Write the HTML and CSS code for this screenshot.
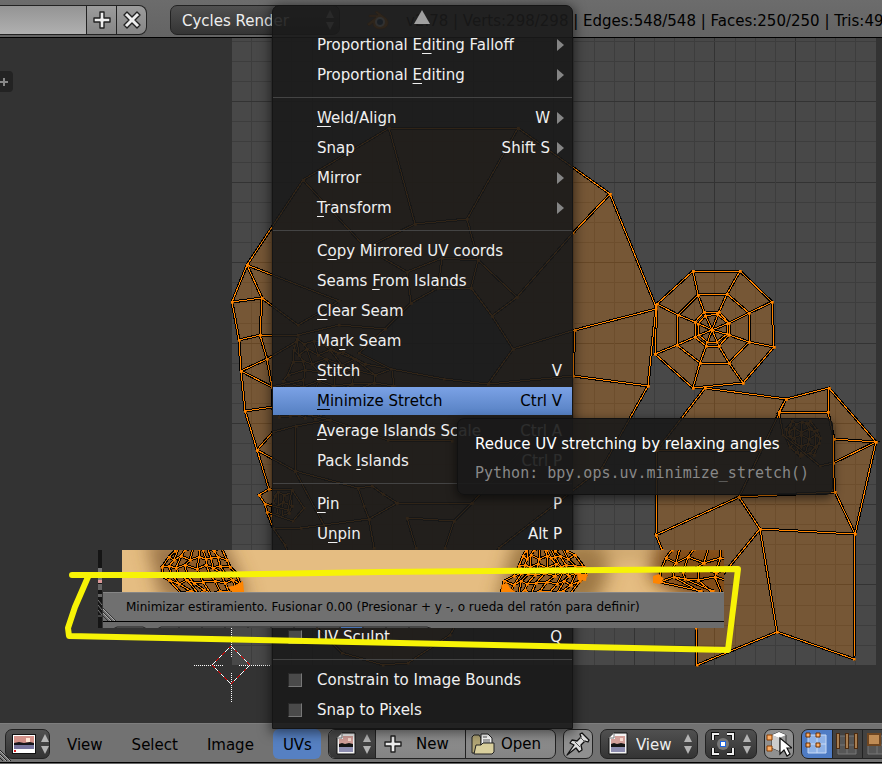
FILE: index.html
```html
<!DOCTYPE html>
<html lang="en">
<head>
    <meta charset="UTF-8">
    <meta name="viewport" content="width=device-width, initial-scale=1.0">
    <title>UV Editor</title>
    <link rel="stylesheet" href="styles.css">
</head>
<body>
    <!-- shared symbols -->
    <svg class="defs" aria-hidden="true">
        <symbol id="updown" viewBox="0 0 8 20"><path d="M0 8L4 0l4 8zM0 12h8l-4 8z" fill="#b4b4b4"/></symbol>
        <symbol id="plus" viewBox="0 0 18 18"><path d="M7 1h4v6h6v4h-6v6H7v-6H1V7h6z" fill="#eee" stroke="#222" stroke-width="1.4" stroke-linejoin="round"/></symbol>
        <symbol id="arrow" viewBox="0 0 8 12"><path d="M0 0l7 6-7 6z" fill="#858585"/></symbol>
        <symbol id="picture" viewBox="0 0 20 24">
            <path d="M6 1h13v21H1V6z" fill="#f4f4f4" stroke="#111"/>
            <path d="M7 4h10v9H3V7h4z" fill="#d3a09a"/>
            <path d="M3 12l3-1 3 1 4-1 4 1v3H3z" fill="#151515"/>
            <path d="M3 15h14v5H3z" fill="#8d8db0"/>
            <path d="M12 6h3v3h-3z" fill="#f7d9ce"/>
            <path d="M1 6h5V1" fill="#fff" stroke="#777"/>
        </symbol>
    </svg>

    <header class="info-bar">
        <div class="scene-field">
            <input type="text" aria-label="Scene name">
            <button aria-label="Add scene"><svg width="18" height="18"><use href="#plus"/></svg></button>
            <button aria-label="Delete scene"><svg width="18" height="18" viewBox="0 0 18 18"><path d="M4 1l5 5 5-5 3 3-5 5 5 5-3 3-5-5-5 5-3-3 5-5-5-5z" fill="#eee" stroke="#222" stroke-width="1.4" stroke-linejoin="round"/></svg></button>
        </div>
        <div class="picker engine">
            <select aria-label="Render engine"><option>Cycles Render</option></select>
            <svg width="8" height="20"><use href="#updown"/></svg>
        </div>
        <svg class="logo" width="24" height="20" viewBox="0 0 24 20">
            <path d="M1 14l9-7H3V5h9L9 2l2-1 9 7c5 5 1 11-6 11-4 0-7-2-7-6l-4 3z" fill="#e88b2d" stroke="#8a4b12" stroke-width=".7"/>
            <circle cx="14" cy="12" r="5" fill="#fff"/><circle cx="14" cy="12" r="3" fill="#265787"/>
        </svg>
        <p class="stats">v2.78 | Verts:298/298 | Edges:548/548 | Faces:250/250 | Tris:496</p>
    </header>

    <main class="stage">
        <svg class="canvas" viewBox="0 38 882 685" preserveAspectRatio="xMinYMin slice" aria-label="UV layout">
            <defs>
                <marker id="vert" markerUnits="userSpaceOnUse" markerWidth="3" markerHeight="3" refX="1.5" refY="1.5"><rect width="3" height="3" fill="#ff8500"/></marker>
                <path id="islands" d="M303 180L389 128 518 128 610 194 656 307 648 386 602 468 499 548 450 635 408 663 383 665 342 653 317 628 285 545 273 528 267 512 265 504 259 495 269 489 257 450 245 411 241 371 239 340 232 302 247 265zM411 303L438 288 471 288 492 316 513 349 488 384 444 379 391 369 359 353 385 329z
                    M693 271L740 271 772 302 774 347 743 383 693 388 655 354 657 304z
                    M705 388L786 399 829 388 876 442 855 534 854 659 777 632 697 665 696 628 684 590 662 550 656 535 657 450z"/>
                <path id="edges" d="M610 194L573 233 517 297 492 316M656 309L575 330 513 349M648 386L573 376 488 384M575 330L573 376M389 128L415 224 467 219 518 128M415 224L366 248 303 180M467 219L478 260 442 258 407 272 366 248M442 258L438 288M478 260L471 288M407 272L411 303M478 260L517 297
                    M247 265L262 298 260 335 267 359 272 387 273 410M232 302L262 298 298 325 339 301 247 265M239 340L260 335 298 335 339 325 385 329M241 371L267 359 296 342M241 371L272 387 303 380M245 411L273 407 330 420M257 450L273 432 296 426M257 450L295 471 358 488 372 486 383 494 397 503 472 503 540 430M269 489L292 490 288 510 265 504M292 490L304 508 293 521 267 512M295 471L296 426 330 420 388 440 452 441M358 488L364 506 369 519 374 548M369 519L301 528 273 528M397 503L369 519M407 518L454 521 472 503M407 518L416 548M454 521L445 548M295 471L325 527
                    M698 295L727 294 749 313 749 342 729 363 700 363 677 345 678 315zM704 312L719 312 729 323 729 335 719 346 706 346 695 337 695 322zM705 316L717 314 728 323 727 334 717 342 707 342 699 335 698 324z
                    M693 271L698 295 704 312 712 330 719 346 729 363 743 383M740 271L727 294 719 312 712 330 706 346 700 363 693 388M772 302L749 313 729 323 712 330 695 337 677 345 655 354M774 347L749 342 729 335 712 330 695 322 678 315 657 304
                    M786 399L779 412 828 412 829 388M828 412L834 439 876 442 833 463 835 492 855 534 760 529 777 632M834 439L833 463M656 535L739 497 835 492M786 399L739 497 760 529 684 622M779 412L783 435 820 466 833 463M657 450L760 450"/>
            </defs>
            <rect x="232" y="38" width="644" height="627" fill="#484848"/>
            <g id="grid" shape-rendering="crispEdges"></g>
            <use href="#islands" fill="#ff8500" fill-opacity=".25" fill-rule="evenodd"/>
            <g id="dense"></g>
            <g class="wire-shadow"><use href="#islands"/><use href="#edges"/></g>
            <g class="wire"><use href="#islands"/><use href="#edges"/></g>
            <g fill="none" shape-rendering="crispEdges">
                <path d="M194 665h30M239 665h31M231 628v30M231 673v30" stroke="#fff" stroke-dasharray="1 1"/>
                <path d="M231 646l19 19-19 19-19-19z" stroke="#f00"/>
                <path d="M231 646l19 19-19 19-19-19z" stroke="#fff" stroke-dasharray="5 4"/>
            </g>
        </svg>
        <button class="shelf-toggle" aria-label="Show tool shelf"><svg width="8" height="8" viewBox="0 0 8 8"><path d="M3 0h2v3h3v2H5v3H3V5H0V3h3z" fill="#888"/></svg></button>
    </main>

    <footer class="editor-bar">
        <button class="dark editor-type" aria-label="Editor type">
            <svg width="24" height="20" viewBox="0 0 24 20">
                <rect x=".5" y=".5" width="23" height="19" fill="#fff" stroke="#111"/>
                <path d="M2 2h20v8H2z" fill="#d4928a"/><path d="M2 10h20v5H2z" fill="#77749d"/>
                <path d="M2 9l5-1 5 1 6-1 4 1v2H2z" fill="#17151b"/><path d="M14 4h4v4h-4z" fill="#ffe6d6"/>
                <path d="M2 16h2v2H2z" fill="#d22"/>
            </svg>
            <svg width="8" height="20"><use href="#updown"/></svg>
        </button>
        <nav class="menus">
            <button>View</button>
            <button>Select</button>
            <button>Image</button>
            <button class="open">UVs</button>
        </nav>
        <div class="group image-group">
            <button class="dark" aria-label="Browse image"><svg width="20" height="24"><use href="#picture"/></svg><svg width="8" height="20"><use href="#updown"/></svg></button>
            <button class="new"><svg width="18" height="18"><use href="#plus"/></svg>New</button>
            <button class="load">
                <svg width="24" height="22" viewBox="0 0 24 22">
                    <path d="M1 20V4l2-2h5l2 3v15z" fill="#b3a675" stroke="#222"/>
                    <path d="M10 1h7l4 4v9H10z" fill="#fff" stroke="#222"/><path d="M12 4h4M12 7h7M12 9h7" stroke="#555"/>
                    <path d="M5 12h5l2-2h11v9l-2 2H3z" fill="#d9cf9d" stroke="#222"/>
                </svg>Open</button>
        </div>
        <button class="square" aria-label="Pin image">
            <svg width="24" height="24" viewBox="0 0 24 24"><path d="M1 23l7-10-4-2 2-3 5 1 4-4-1-3 2-1 7 7-1 2-3-1-4 4 1 5-3 2-3-4z" fill="#ddd" stroke="#111" stroke-width="1.3" stroke-linejoin="round"/><path d="M9 10l5 5M14 5l5 5" stroke="#555"/></svg>
        </button>
        <div class="picker mode">
            <svg width="20" height="24"><use href="#picture"/></svg>
            <select aria-label="Editing mode"><option>View</option></select>
            <svg width="8" height="20"><use href="#updown"/></svg>
        </div>
        <button class="dark pivot" aria-label="Pivot point">
            <svg width="24" height="24" viewBox="0 0 24 24">
                <path d="M2 8V2h6M16 2h6v6M22 16v6h-6M8 22H2v-6" fill="none" stroke="#111" stroke-width="4"/>
                <path d="M2 8V2h6M16 2h6v6M22 16v6h-6M8 22H2v-6" fill="none" stroke="#eee" stroke-width="2"/>
                <circle cx="12" cy="12" r="6" fill="#777"/><rect x="9" y="9" width="6" height="6" fill="#1d65e0"/><rect x="10" y="10" width="4" height="4" fill="#fff"/>
            </svg>
            <svg width="8" height="20"><use href="#updown"/></svg>
        </button>
        <button class="square" aria-label="Sync selection">
            <svg width="26" height="26" viewBox="0 0 26 26">
                <path d="M6 4l7-3 7 3v13l-7 3-7-3z" fill="#999" stroke="#333"/><path d="M6 4l7-3 7 3-7 3z" fill="#fff"/><path d="M6 4l7 3v13l-7-3z" fill="#ccc"/>
                <path d="M1 4h5v5H1zM1 15h5v5H1z" fill="#ffb066" stroke="#8a3d00"/>
                <path d="M14 7v16l4-4 3 6 3-2-3-6h5z" fill="#fff" stroke="#111" stroke-width="1.2"/>
            </svg>
        </button>
        <div class="group select-modes">
            <button class="active" aria-label="Vertex"><svg width="24" height="24" viewBox="0 0 24 24"><path d="M3 3h18v18H3zM12 3v18M3 12h18" fill="#8fb2e6" stroke="#c9dbf7"/><path d="M1 1h4v4H1zM11 1h4v4h-4zM1 11h4v4H1zM11 11h4v4h-4z" fill="#ffb066" stroke="#6b2f00"/></svg></button>
            <button aria-label="Edge"><svg width="24" height="24" viewBox="0 0 24 24"><path d="M3 4h18v18H3zM12 4v18M3 13h18" fill="#565656" stroke="#777"/><path d="M3 1v16M12 1v16M21 1v16" stroke="#4c2b10" stroke-width="4"/><path d="M3 2v14M12 2v14M21 2v14" stroke="#a87f52" stroke-width="2"/></svg></button>
            <button aria-label="Face"><svg width="24" height="24" viewBox="0 0 24 24"><path d="M3 4h18v18H3zM12 4v18M3 13h18" fill="#565656" stroke="#777"/><path d="M3 2h12v11H3z" fill="#c08c55" stroke="#6f4621" stroke-width="2"/></svg></button>
        </div>
        <svg class="corner" width="12" height="12" viewBox="0 0 12 12"><path d="M0 1l11 11M0 5l7 7M0 9l3 3" stroke="#222"/><path d="M0 2l10 10M0 6l6 6" stroke="#aaa"/></svg>
    </footer>

    <div class="menu" role="menu">
        <svg class="scroll-up" width="16" height="14" viewBox="0 0 16 14"><path d="M8 0l8 14H0z" fill="#a0a0a0"/></svg>
        <button class="item"><span>Proportional E<u>d</u>iting Falloff</span><svg width="8" height="12"><use href="#arrow"/></svg></button>
        <button class="item"><span>Proportional <u>E</u>diting</span><svg width="8" height="12"><use href="#arrow"/></svg></button>
        <hr>
        <button class="item"><span><u>W</u>eld/Align</span><kbd>W</kbd><svg width="8" height="12"><use href="#arrow"/></svg></button>
        <button class="item"><span>Snap</span><kbd>Shift S</kbd><svg width="8" height="12"><use href="#arrow"/></svg></button>
        <button class="item"><span>Mirror</span><svg width="8" height="12"><use href="#arrow"/></svg></button>
        <button class="item"><span><u>T</u>ransform</span><svg width="8" height="12"><use href="#arrow"/></svg></button>
        <hr>
        <button class="item"><span>C<u>o</u>py Mirrored UV coords</span></button>
        <button class="item"><span>Seams <u>F</u>rom Islands</span></button>
        <button class="item"><span><u>C</u>lear Seam</span></button>
        <button class="item"><span>Ma<u>r</u>k Seam</span></button>
        <button class="item"><span><u>S</u>titch</span><kbd>V</kbd></button>
        <button class="item current"><span><u>M</u>inimize Stretch</span><kbd>Ctrl V</kbd></button>
        <button class="item"><span><u>A</u>verage Islands Scale</span><kbd>Ctrl A</kbd></button>
        <button class="item"><span>Pack <u>I</u>slands</span><kbd>Ctrl P</kbd></button>
        <hr>
        <button class="item"><span><u>P</u>in</span><kbd>P</kbd></button>
        <button class="item"><span>U<u>n</u>pin</span><kbd>Alt P</kbd></button>
        <div class="covered"></div>
        <label class="item"><input type="checkbox"><span>UV Sculpt</span><kbd>Q</kbd></label>
        <hr>
        <label class="item"><input type="checkbox"><span>Constrain to Image Bounds</span></label>
        <label class="item"><input type="checkbox"><span>Snap to Pixels</span></label>
    </div>

    <div class="tooltip" role="tooltip">
        <p>Reduce UV stretching by relaxing angles</p>
        <code>Python: bpy.ops.uv.minimize_stretch()</code>
    </div>

    <section class="inset">
        <svg class="inset-edge" width="5" height="78" viewBox="0 0 5 78"><path d="M0 0h4v78H0z" fill="#151515"/><path d="M0 18h4v12H0z" fill="#777"/><path d="M0 30h4v3H0z" fill="#d99"/><path d="M0 34h4v6H0zM0 44h4v3H0z" fill="#666"/><path d="M0 50l4 5M0 55l4 5M0 60l4 5M0 66h4" stroke="#777"/></svg>
        <div class="inset-body">
            <svg class="skin" viewBox="122 550 602 42" preserveAspectRatio="xMinYMin slice">
                <defs>
                    <filter id="soft"><feGaussianBlur stdDeviation="9"/></filter>
                </defs>
                <rect x="122" y="550" width="602" height="42" fill="#e5bd82"/>
                <g filter="url(#soft)">
                    <path d="M146 540h78l26 60h-88z" fill="#7d5a30" opacity=".75"/>
                    <path d="M515 540h85l10 30-15 35h-100z" fill="#8b6536" opacity=".8"/>
                    <path d="M560 545h90v12h-90z" fill="#a98552" opacity=".6"/>
                    <path d="M655 540h90v60h-60l-35-22z" fill="#774615" opacity=".9"/>
                </g>
                <g id="heads"></g>
            </svg>
            <p class="status">Minimizar estiramiento. Fusionar 0.00 (Presionar + y -, o rueda del ratón para definir)
                <svg class="grip" width="14" height="14" viewBox="0 0 14 14"><path d="M0 1l13 13M0 5l9 9M0 9l5 5" stroke="#333"/><path d="M0 2l12 12M0 6l8 8" stroke="#aaa"/></svg>
            </p>
            <svg class="inset-tabs" viewBox="0 0 621 7" preserveAspectRatio="xMinYMin slice"><path d="M10 7l4-2h26l4 2M54 7l4-2h266l6 2M76 5v2M99 5v2M122 5v2M145 5v2M168 5v2M191 5v2M214 5v2M237 5v2M260 5v2M283 5v2M306 5v2" fill="none" stroke="#222"/><path d="M238 5h21v2h-21z" fill="#4772b3"/></svg>
        </div>
    </section>

    <svg class="highlight" width="680" height="92" viewBox="64 564 680 92"><path d="M72 575L200 575 380 572 738 569 728 650 400 643 69 636 68 628 75 607 88 577" fill="none" stroke="#f7f306" stroke-width="6" stroke-linecap="round" stroke-linejoin="round"/></svg>

    <script src="script.js"></script>
</body>
</html>
```
FILE: styles.css
```css
* {
    box-sizing: border-box;
}

body {
    margin: 0;
    height: 100vh;
    display: flex;
    flex-direction: column;
    position: relative;
    overflow: hidden;
    background: #333;
    font: 15px/20px "DejaVu Sans", sans-serif;
    color: #000;
}

p, hr {
    margin: 0;
}

button, select, input, kbd {
    font: inherit;
    color: inherit;
}

button {
    display: flex;
    align-items: center;
    flex-shrink: 0;
    border: 0;
    padding: 0;
    background: none;
    white-space: nowrap;
}

svg {
    flex-shrink: 0;
}

.defs {
    position: absolute;
    width: 0;
    height: 0;
}

/* top bar */
.info-bar {
    display: flex;
    align-items: center;
    height: 38px;
    padding-top: 2px;
    background: linear-gradient(#6c6c6c, #646464);
    border-bottom: 1px solid #000;
    overflow: hidden;
}

.scene-field {
    display: flex;
    flex-shrink: 0;
    height: 30px;
    border: 1px solid #222;
    border-left: 0;
    border-radius: 0 8px 8px 0;
    overflow: hidden;
    background: linear-gradient(#9c9c9c, #868686);
}

.scene-field input {
    width: 86px;
    border: 0;
    background: linear-gradient(#949494, #b0b0b0);
}

.scene-field button {
    width: 30px;
    justify-content: center;
    border-left: 1px solid #222;
}

.picker, .dark {
    display: flex;
    align-items: center;
    flex-shrink: 0;
    height: 30px;
    border: 1px solid #222;
    border-radius: 7px;
    background: linear-gradient(#505050, #343434);
    color: #eee;
}

.picker select {
    flex: 1;
    min-width: 0;
    appearance: none;
    border: 0;
    padding: 2px 0 0;
    background: none;
}

.engine {
    width: 170px;
    margin-left: 23px;
    padding: 0 5px 0 11px;
}

.logo {
    margin-left: 26px;
}

.stats {
    margin-left: 16px;
    padding-top: 2px;
    white-space: nowrap;
}

/* uv canvas */
.stage {
    flex: 1;
    min-height: 0;
    position: relative;
}

.canvas {
    display: block;
    width: 100%;
    height: 100%;
}

.wire, .wire-shadow {
    fill: none;
    shape-rendering: crispEdges;
}

.wire-shadow {
    stroke: #000;
    stroke-width: 3;
}

.wire {
    stroke: #ff8500;
    stroke-width: 1;
    marker: url(#vert);
}

.shelf-toggle {
    position: absolute;
    left: 0;
    top: 33px;
    width: 13px;
    height: 21px;
    background: #232323;
    border-radius: 0 4px 4px 0;
}

/* bottom bar */
.editor-bar {
    display: flex;
    align-items: flex-start;
    height: 41px;
    padding: 5px 0 0 5px;
    position: relative;
    overflow: hidden;
    background: linear-gradient(#727272 38px, #000 38px, #000 39px, #666 39px);
    border-top: 1px solid #7e7e7e;
}

.editor-type {
    width: 45px;
    padding-left: 6px;
    gap: 5px;
}

.menus {
    display: flex;
    flex-shrink: 0;
    margin-left: 7px;
}

.menus button {
    height: 30px;
    padding: 2px 9px 0 10px;
    margin-right: 10px;
}

.menus .open {
    background: #5680c2;
    border-radius: 6px;
    margin-right: 7px;
}

.group {
    display: flex;
    flex-shrink: 0;
    height: 30px;
    border: 1px solid #222;
    border-radius: 7px;
    overflow: hidden;
    background: linear-gradient(#929292, #848484);
}

.group button {
    height: 28px;
    border: 0;
    border-radius: 0;
}

.group button + button {
    border-left: 1px solid #222;
}

.image-group .dark {
    width: 46px;
    padding-left: 7px;
    gap: 7px;
}

.new {
    width: 90px;
    padding-left: 8px;
    gap: 14px;
}

.load {
    width: 90px;
    padding-left: 5px;
    gap: 6px;
}

.square {
    width: 30px;
    height: 30px;
    margin-left: 7px;
    justify-content: center;
    border: 1px solid #222;
    border-radius: 7px;
    background: #909090;
}

.mode {
    width: 98px;
    margin-left: 7px;
    padding: 0 5px 0 7px;
}

.mode select {
    margin-left: 8px;
}

.pivot {
    width: 52px;
    margin-left: 7px;
    padding-left: 5px;
    gap: 8px;
}

.select-modes {
    flex: 1 0 92px;
    margin-left: 7px;
    background: #424242;
}

.select-modes button {
    width: 30px;
    justify-content: center;
}

.select-modes .active {
    background: #4f7cc4;
}

.corner {
    position: absolute;
    left: 0;
    bottom: 3px;
}

/* uvs menu, opens upward over the canvas */
.menu {
    position: absolute;
    left: 272px;
    bottom: 35px;
    width: 301px;
    display: flex;
    flex-direction: column;
    padding: 25px 0 2px;
    border: 1px solid #151515;
    border-radius: 7px 7px 0 0;
    background: rgba(25, 25, 25, .9);
    box-shadow: 0 2px 12px 2px rgba(0, 0, 0, .5);
    color: #f0f0f0;
}

.scroll-up {
    position: absolute;
    left: 141px;
    top: 4px;
}

.item {
    display: flex;
    align-items: center;
    width: 100%;
    height: 28px;
    margin-bottom: 2px;
    padding: 0 10px 0 44px;
    text-align: left;
}

.item span {
    flex: 1;
}

.item svg {
    margin: 0 -3px 0 7px;
}

.item u {
    text-underline-offset: 3px;
    text-decoration-thickness: 1px;
    text-decoration-skip-ink: none;
}

.item input {
    appearance: none;
    width: 14px;
    height: 14px;
    margin: 0 15px 0 -29px;
    border: 1px solid #777;
    border-color: #2a2a2a #777 #777 #2a2a2a;
    background: #4a4a4a;
}

.current {
    background: linear-gradient(#7ba2e6, #5680c2);
    color: #000;
}

.menu hr {
    width: 100%;
    height: 1px;
    margin: 6px 0;
    border: 0;
    background: #444;
}

.covered {
    height: 73px;
}

.tooltip {
    position: absolute;
    left: 457px;
    top: 418px;
    padding: 15px 23px 11px 17px;
    border: 1px solid #111;
    border-radius: 7px;
    background: rgba(25, 25, 25, .91);
    box-shadow: 0 3px 10px 1px rgba(0, 0, 0, .5);
    color: #fff;
}

.tooltip code {
    display: block;
    margin-top: 9px;
    font: 15px/20px "DejaVu Sans Mono", monospace;
    color: #888;
}

/* pasted status strip */
.inset {
    position: absolute;
    left: 98px;
    top: 550px;
    width: 626px;
    display: flex;
    background: #333;
}

.inset-body {
    flex: 1;
    min-width: 0;
}

.skin {
    display: block;
    height: 42px;
    width: 602px;
    margin-left: 19px;
}

.status {
    position: relative;
    height: 30px;
    padding-left: 23px;
    border-top: 1px solid #868686;
    border-bottom: 1px solid #000;
    background: #707070;
    font-size: 12px;
    line-height: 28px;
    white-space: nowrap;
}

.grip {
    position: absolute;
    left: 0;
    bottom: 0;
}

.inset-tabs {
    display: block;
    width: 100%;
    height: 6px;
    background: #6b6b6b;
}

.highlight {
    position: absolute;
    left: 64px;
    top: 564px;
}
```
FILE: script.js
```js
const NS = 'http://www.w3.org/2000/svg';

function addPath(parent, d, attrs) {
    const path = document.createElementNS(NS, 'path');
    path.setAttribute('d', d);
    for (const name in attrs) {
        path.setAttribute(name, attrs[name]);
    }
    parent.appendChild(path);
}

// Grid: 32 cells over the image, every 4th line is darker
const grid = document.getElementById('grid');
const step = 20.14;
for (let i = 1; i < 32; i++) {
    const x = Math.round(232 + i * step) - 0.5;
    const y = Math.round(665 - i * step) + 0.5;
    let d = `M${x} 38V665`;
    if (y > 38) {
        d += `M232 ${y}H876`;
    }
    addPath(grid, d, { stroke: i % 4 === 0 ? '#333' : '#3d3d3d' });
}

// Mesh between a left and a right outline. rows: [y, left, right]
function mesh(parent, rows, cols, jitter) {
    const points = rows.map((row, r) => {
        const line = [];
        for (let c = 0; c <= cols; c++) {
            const x = row[1] + (row[2] - row[1]) * c / cols + Math.sin(r * 7 + c * 5) * jitter;
            const y = row[0] + Math.cos(r * 4 + c * 9) * jitter;
            line.push(`${Math.round(x)} ${Math.round(y)}`);
        }
        return line;
    });
    let d = '';
    points.forEach(line => {
        d += 'M' + line.join('L');
    });
    for (let c = 0; c <= cols; c++) {
        d += 'M' + points.map(line => line[c]).join('L');
    }
    const outline = 'M' + rows.map(r => `${r[1]} ${r[0]}`).join('L') + 'L' + rows.slice().reverse().map(r => `${r[2]} ${r[0]}`).join('L') + 'z';
    addPath(parent, outline, { fill: '#80440a', 'fill-opacity': 0.5 });
    addPath(parent, d, { class: 'wire-shadow' });
    addPath(parent, d, { class: 'wire' });
}

const heads = document.getElementById('heads');
mesh(heads, [[549, 175, 220], [558, 168, 227], [567, 160, 231], [574, 160, 238], [582, 168, 242], [592, 182, 243]], 8, 2);
mesh(heads, [[549, 526, 565], [557, 522, 573], [566, 517, 583], [574, 512, 586], [583, 503, 581], [592, 502, 572]], 9, 2);
mesh(heads, [[547, 672, 730], [560, 664, 730], [570, 658, 728], [579, 657, 730], [594, 700, 730]], 5, 3);
addPath(heads, 'M501 585l6-2 3 5 6 4h-14zM577 573l10 2-1 6-8-1zM653 576l6-2 5 5-5 5-6-1zM228 587l8-2 7-4 1 11h-12z', { fill: '#ff8500' });

const dense = document.getElementById('dense');
mesh(dense, [[342, 294, 330], [352, 292, 345], [362, 290, 365], [372, 285, 390], [384, 282, 391], [398, 284, 350], [416, 282, 325]], 6, 3);
mesh(dense, [[423, 790, 812], [430, 785, 818], [437, 784, 820], [445, 788, 818], [454, 795, 812]], 6, 2);
mesh(dense, [[494, 275, 290], [504, 272, 292], [515, 270, 290]], 3, 2);
```
